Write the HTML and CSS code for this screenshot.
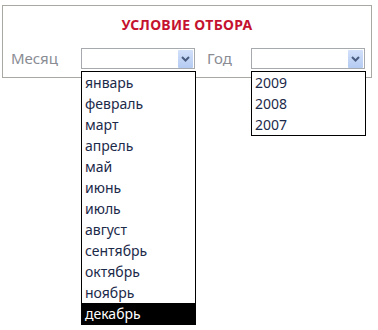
FILE: index.html
```html
<!DOCTYPE html>
<html lang="ru">
<head>
    <meta charset="UTF-8">
    <title>Условие отбора</title>
    <link rel="stylesheet" href="styles.css">
</head>
<body>

<div class="panel">
    <h2 class="title">УСЛОВИЕ ОТБОРА</h2>
    <div class="filters">
        <span class="label label-month">Месяц</span>
        <div class="combo">
            <div class="combo-box">
                <span class="combo-btn">
                    <svg width="9" height="6" viewBox="0 0 9 6"><path d="M1 1 L4.5 4.5 L8 1" fill="none" stroke="#4a5d80" stroke-width="2"/></svg>
                </span>
            </div>
            <ul class="list">
                <li>январь</li>
                <li>февраль</li>
                <li>март</li>
                <li>апрель</li>
                <li>май</li>
                <li>июнь</li>
                <li>июль</li>
                <li>август</li>
                <li>сентябрь</li>
                <li>октябрь</li>
                <li>ноябрь</li>
                <li class="selected">декабрь</li>
            </ul>
        </div>
        <span class="label label-year">Год</span>
        <div class="combo">
            <div class="combo-box">
                <span class="combo-btn">
                    <svg width="9" height="6" viewBox="0 0 9 6"><path d="M1 1 L4.5 4.5 L8 1" fill="none" stroke="#4a5d80" stroke-width="2"/></svg>
                </span>
            </div>
            <ul class="list">
                <li>2009</li>
                <li>2008</li>
                <li>2007</li>
            </ul>
        </div>
    </div>
</div>

</body>
</html>
```

FILE: styles.css
```css
html, body {
    min-height: 330px;
}
body {
    margin: 0;
    font-family: "Noto Sans", "DejaVu Sans", sans-serif;
    background-color: #ffffff;
    color: #1a1a1a;
}
.panel {
    margin: 5px 0 0 2px;
    width: 368px;
    height: 71px;
    border: 1px solid #a9a9a3;
}
.title {
    margin: 0;
    padding-top: 9px;
    height: 24px;
    font-size: 14px;
    line-height: 20px;
    text-align: center;
    color: #c4122f;
    font-weight: bold;
    letter-spacing: 0.3px;
}
.filters {
    display: flex;
    align-items: flex-start;
    padding-left: 8px;
    margin-top: 9px;
}
.label {
    font-size: 15px;
    line-height: 21px;
    color: #8a8c94;
}
.label-month {
    width: 70px;
}
.label-year {
    width: 44px;
    padding-left: 12px;
}
.combo {
    width: 114px;
    position: relative;
    z-index: 2;
}
.combo-box {
    height: 19px;
    border: 1px solid #a6a9ae;
    display: flex;
    justify-content: flex-end;
    align-items: center;
    padding-right: 1px;
}
.combo-btn {
    width: 15px;
    height: 18px;
    display: flex;
    align-items: center;
    justify-content: center;
    background: linear-gradient(#d2e0fa, #b4cbf2);
    border-radius: 1px;
}
.list {
    width: 113px;
    margin: 2px 0 0 0;
    padding: 0;
    list-style: none;
    border: 1px solid #000000;
    background-color: #ffffff;
}
.list li {
    height: 21px;
    line-height: 21px;
    padding-left: 3px;
    font-size: 14px;
    color: #1c2a4a;
}
.list li.selected {
    background-color: #000000;
    color: #ffffff;
}
```
